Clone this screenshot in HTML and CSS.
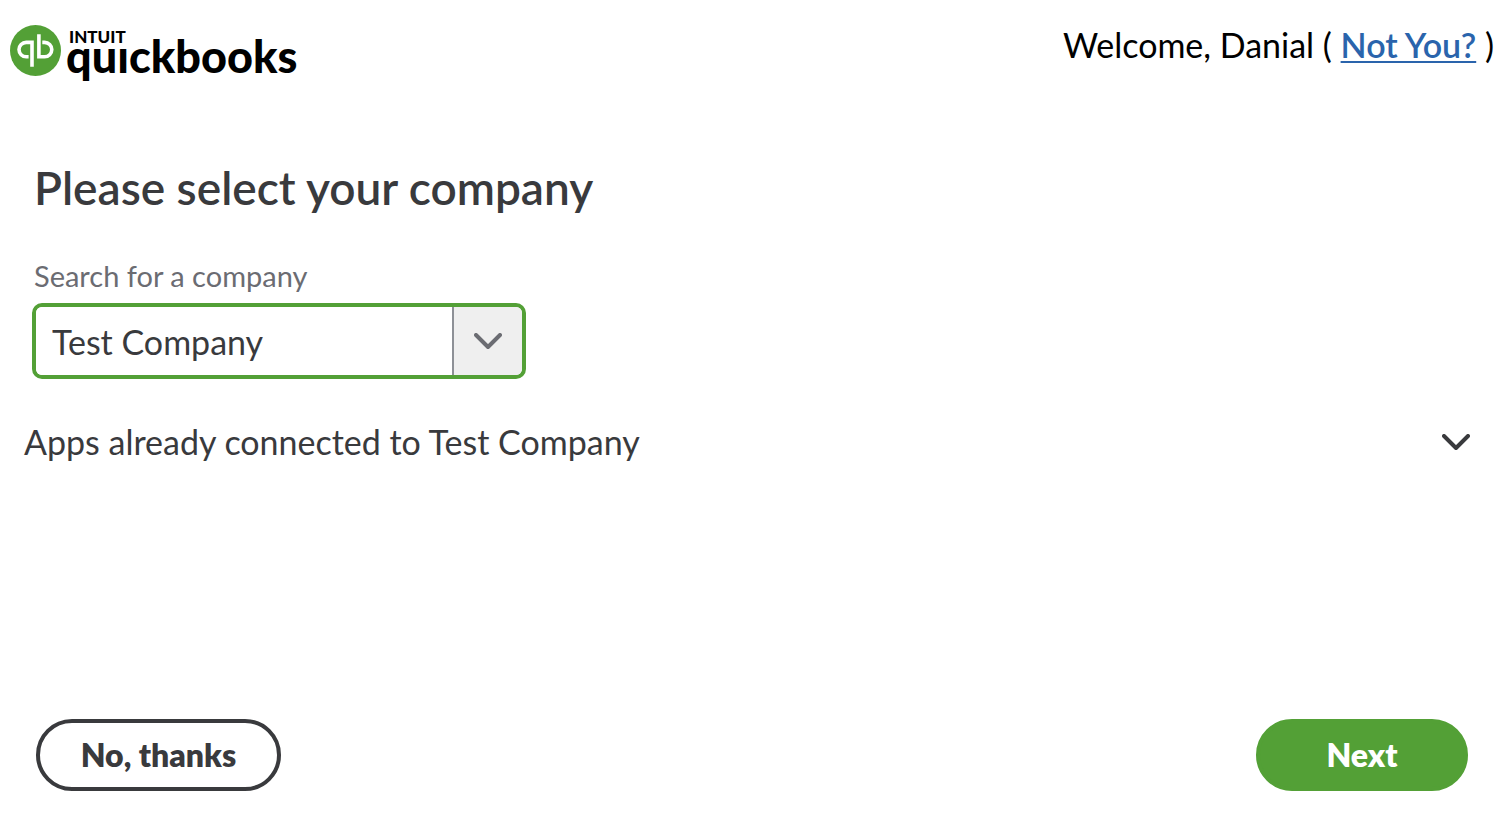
FILE: index.html
```html
<!DOCTYPE html>
<html lang="en">
<head>
<meta charset="utf-8">
<meta name="viewport" content="width=device-width, initial-scale=1">
<title>Select your company</title>
<link rel="stylesheet" href="styles.css">
</head>
<body>
<header class="topbar">
  <div class="logo" role="img" aria-label="Intuit QuickBooks">
    <svg class="logo-mark" viewBox="0 0 51 51" aria-hidden="true">
      <circle cx="25.500" cy="25.500" r="25.500" fill="#53a036"/>
      <g fill="none" stroke="#fff" stroke-width="3.600">
        <path d="M22 41.800V17.400H16.200a7.200 7.200 0 0 0 0 14.400H18.600"/>
        <path d="M28.900 9.200V31.800H34.600a7.200 7.200 0 0 0 0-14.400H32.300"/>
      </g>
    </svg>
    <div class="logo-words">
      <span class="logo-intuit">INTUIT</span>
      <span class="logo-name">quıckbooks</span>
    </div>
  </div>
  <p class="welcome">Welcome, Danial ( <a class="switch-user" href="#">Not You?</a> )</p>
</header>
<main class="content">
  <section class="picker">
    <h1 class="title">Please select your company</h1>
    <label class="field-label" for="company">Search for a company</label>
    <div class="combo">
      <input class="combo-input" id="company" type="text" value="Test Company">
      <button class="combo-toggle" type="button" aria-label="Show companies">
        <svg class="chevron" viewBox="0 0 28 17"><path d="M2 2l12 12L26 2"/></svg>
      </button>
    </div>
  </section>
  <button class="apps" type="button" aria-expanded="false">
    <span>Apps already connected to Test Company</span>
    <svg class="chevron" viewBox="0 0 28 17" aria-hidden="true"><path d="M2 2l12 12L26 2"/></svg>
  </button>
</main>
<footer class="actions">
  <button class="btn btn-secondary" type="button">No, thanks</button>
  <button class="btn btn-primary" type="button">Next</button>
</footer>
</body>
</html>
```
FILE: styles.css
```css
* { box-sizing: border-box; }

body {
  margin: 0;
  min-height: 100vh;
  display: flex;
  flex-direction: column;
  background: #fff;
  color: #393a3d;
  font-family: Lato, "Liberation Sans", sans-serif;
  font-size: 34px;
  line-height: 40px;
}

button, input { font: inherit; color: inherit; }
button { cursor: pointer; }

.topbar {
  display: flex;
  justify-content: space-between;
  align-items: flex-start;
  padding: 25px 16px 0 10px;
}

.logo { display: flex; gap: 5px; color: #000; }
.logo-mark { width: 51px; height: 51px; }
.logo-words { display: flex; flex-direction: column; padding-top: 4px; }
.logo-intuit { padding-left: 3px; font-size: 17px; font-weight: 900; line-height: 16px; }
.logo-name { margin-top: -12px; font-size: 45px; font-weight: 900; line-height: 46px; }

.welcome { margin: 0; color: #000; }
.switch-user {
  color: #2a64ac;
  font-weight: 600;
  text-decoration-thickness: 2px;
  text-underline-offset: 3px;
}

.content { flex: 1; padding: 81px 24px 0; }
.picker { padding: 0 8px; }
.title { margin: 0 2px 42px; font-size: 46px; font-weight: 600; line-height: 56px; }
.field-label {
  display: block;
  margin: 0 2px 9px;
  color: #6b6c72;
  font-size: 29px;
  line-height: 36px;
}

.combo {
  display: flex;
  width: 100%;
  max-width: 494px;
  height: 76px;
  border: 4px solid #53a036;
  border-radius: 10px;
  overflow: hidden;
}
.combo-input {
  flex: 1;
  min-width: 0;
  padding: 2px 16px 0;
  border: 0;
  outline: 0;
  background: #fff;
}
.combo-toggle {
  display: flex;
  justify-content: center;
  align-items: center;
  width: 70px;
  padding: 0;
  border: 0;
  border-left: 2px solid #8d9096;
  background: #efefef;
  color: #6b6c72;
}

.chevron {
  width: 28px;
  height: 17px;
  flex: none;
  fill: none;
  stroke: currentColor;
  stroke-width: 4;
  stroke-linecap: round;
  stroke-linejoin: round;
}

.apps {
  display: flex;
  justify-content: space-between;
  align-items: center;
  width: 100%;
  margin-top: 43px;
  padding: 0 16px 0 0;
  border: 0;
  background: none;
  text-align: left;
}

.actions {
  display: flex;
  justify-content: space-between;
  padding: 24px 42px 39px 36px;
}
.btn {
  height: 72px;
  border-radius: 36px;
  border: 4px solid #393a3d;
  font-size: 32px;
  font-weight: 800;
}
.btn-secondary { min-width: 245px; background: #fff; }
.btn-primary { min-width: 212px; border-color: #53a036; background: #53a036; color: #fff; }
```
